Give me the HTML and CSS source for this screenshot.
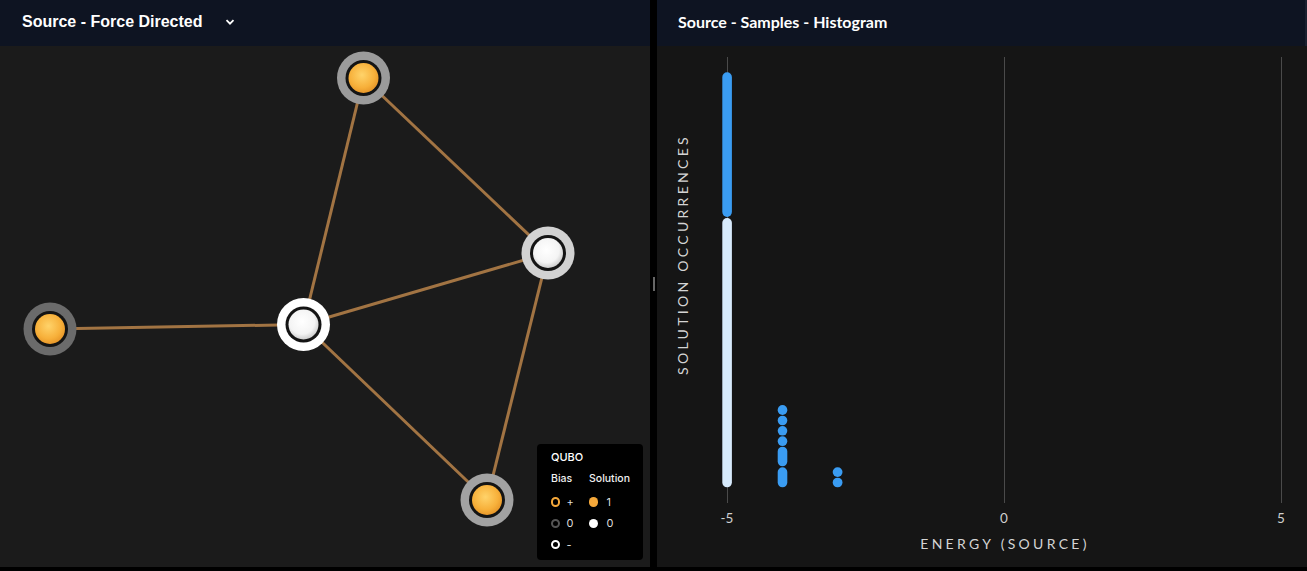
FILE: index.html
```html
<!DOCTYPE html>
<html>
<head>
<meta charset="utf-8">
<link rel="stylesheet" href="styles.css">
</head>
<body>
<div class="app">
  <section class="panel panel-left">
    <header class="panel-header">
      <span class="title title-left">Source - Force Directed</span>
      <svg class="chevron" width="10" height="8" viewBox="0 0 10 8"><path d="M1.5 2.2 L5 5.7 L8.5 2.2" fill="none" stroke="#fff" stroke-width="1.8"/></svg>
    </header>
    <div class="panel-body graph-body">
      <svg class="graph" width="650" height="521" viewBox="0 0 650 521">
        <defs>
          <radialGradient id="orange" cx="45%" cy="40%" r="60%">
            <stop offset="0%" stop-color="#ffd36a"/>
            <stop offset="70%" stop-color="#f7b03a"/>
            <stop offset="100%" stop-color="#e8982a"/>
          </radialGradient>
          <radialGradient id="white" cx="45%" cy="40%" r="60%">
            <stop offset="0%" stop-color="#ffffff"/>
            <stop offset="70%" stop-color="#f4f4f4"/>
            <stop offset="100%" stop-color="#cfcfcf"/>
          </radialGradient>
        </defs>
        <g class="edges" stroke="#a27443" stroke-width="3">
          <line x1="363.5" y1="32" x2="303.5" y2="278.5"/>
          <line x1="363.5" y1="32" x2="548" y2="207"/>
          <line x1="303.5" y1="278.5" x2="548" y2="207"/>
          <line x1="303.5" y1="278.5" x2="50" y2="283"/>
          <line x1="303.5" y1="278.5" x2="487" y2="454"/>
          <line x1="548" y1="207" x2="487" y2="454"/>
        </g>
        <g transform="translate(363.5 32)">
          <circle r="26.5" fill="#9b9b9b"/><circle r="18" fill="#141414"/><circle r="15" fill="url(#orange)"/>
        </g>
        <g transform="translate(548 207)">
          <circle r="26.5" fill="#d2d2d2"/><circle r="18" fill="#141414"/><circle r="15" fill="url(#white)"/>
        </g>
        <g transform="translate(303.5 278.5)">
          <circle r="26.5" fill="#ffffff"/><circle r="18" fill="#141414"/><circle r="15" fill="url(#white)"/>
        </g>
        <g transform="translate(50 283)">
          <circle r="26.5" fill="#6b6b6b"/><circle r="18" fill="#141414"/><circle r="15" fill="url(#orange)"/>
        </g>
        <g transform="translate(487 454)">
          <circle r="26.5" fill="#a2a2a2"/><circle r="18" fill="#141414"/><circle r="15" fill="url(#orange)"/>
        </g>
      </svg>
      <div class="legend">
        <div class="legend-title">QUBO</div>
        <div class="legend-grid">
          <div class="legend-head">Bias</div>
          <div class="legend-head">Solution</div>
          <div class="legend-item"><span class="ring ring-plus"></span><span>+</span></div>
          <div class="legend-item sol"><span class="dot dot-one"></span><span>1</span></div>
          <div class="legend-item"><span class="ring ring-zero"></span><span>0</span></div>
          <div class="legend-item sol"><span class="dot dot-zero"></span><span>0</span></div>
          <div class="legend-item"><span class="ring ring-minus"></span><span>-</span></div>
        </div>
      </div>
    </div>
  </section>
  <div class="divider"><span class="handle"></span></div>
  <section class="panel panel-right">
    <header class="panel-header header-right">
      <span class="title title-right">Source - Samples - Histogram</span>
    </header>
    <div class="panel-body chart-body">
      <svg class="chart" width="650" height="521" viewBox="0 0 650 521">
        <g stroke="#4a4a4a" stroke-width="1">
          <line x1="70.5" y1="11" x2="70.5" y2="457"/>
          <line x1="347.5" y1="11" x2="347.5" y2="457"/>
          <line x1="624.5" y1="11" x2="624.5" y2="457"/>
        </g>
        <rect x="65.3" y="172" width="9.6" height="269.3" rx="4.8" fill="#d7eafc"/>
        <rect x="65.3" y="26.3" width="9.6" height="144.6" rx="4.8" fill="#3a9cf2"/>
        <g fill="#3a9cf2">
          <rect x="120.7" y="359" width="9.6" height="10" rx="4.8"/>
          <rect x="120.7" y="369.7" width="9.6" height="9.6" rx="4.8"/>
          <rect x="120.7" y="380" width="9.6" height="9.6" rx="4.8"/>
          <rect x="120.7" y="390.3" width="9.6" height="9.8" rx="4.8"/>
          <rect x="120.7" y="400.7" width="9.6" height="19.6" rx="4.8"/>
          <rect x="120.7" y="421.3" width="9.6" height="20" rx="4.8"/>
          <rect x="175.7" y="421.3" width="9.8" height="9.6" rx="4.8"/>
          <rect x="175.7" y="431.7" width="9.8" height="9.6" rx="4.8"/>
        </g>
        <g class="tick-labels" fill="#d0d0d0" text-anchor="middle">
          <text x="70" y="477">-5</text>
          <text x="347" y="477">0</text>
          <text x="624" y="477">5</text>
        </g>
        <text class="axis-label" x="348" y="503" text-anchor="middle">ENERGY (SOURCE)</text>
        <text class="axis-label" transform="translate(31 208.5) rotate(-90)" text-anchor="middle">SOLUTION OCCURRENCES</text>
      </svg>
    </div>
  </section>
</div>
</body>
</html>
```

FILE: styles.css
```css
html, body {
  margin: 0;
  padding: 0;
}
body {
  background: #000;
  width: 1307px;
  height: 571px;
  overflow: hidden;
  font-family: "Lato", "Liberation Sans", sans-serif;
}
.app {
  display: flex;
  height: 567px;
}
.panel {
  display: flex;
  flex-direction: column;
}
.panel-left {
  width: 650px;
  background: #1b1b1b;
}
.panel-right {
  width: 650px;
  background: #151515;
}
.divider {
  width: 7px;
  display: flex;
  align-items: center;
  justify-content: center;
  background: #000;
}
.handle {
  display: block;
  width: 2px;
  height: 14px;
  background: #666;
}
.panel-header {
  height: 46px;
  background: #0e1422;
  display: flex;
  align-items: center;
  padding-left: 22px;
  flex-shrink: 0;
}
.header-right {
  padding-left: 21px;
  border-right: 2px solid #1a2130;
}
.title {
  color: #fff;
}
.title-left {
  font-family: "Liberation Sans", Arial, sans-serif;
  font-weight: 700;
  font-size: 16px;
  position: relative;
  top: -1px;
}
.title-right {
  font-family: "Lato", sans-serif;
  font-weight: 700;
  font-size: 16px;
  position: relative;
  top: -2px;
}
.chevron {
  margin-left: 22px;
  position: relative;
  top: -1px;
}
.panel-body {
  flex: 1;
  position: relative;
}
.graph, .chart {
  display: block;
}
.legend {
  position: absolute;
  right: 7px;
  bottom: 7px;
  width: 106px;
  height: 116px;
  box-sizing: border-box;
  background: #000;
  border-radius: 4px;
  padding: 7px 0 0 14px;
  color: #e6e6e6;
  font-family: "Inter", "Liberation Sans", sans-serif;
  font-size: 10.5px;
}
.legend-title {
  font-weight: 500;
  color: #fff;
  line-height: 13px;
  font-size: 11px;
}
.legend-grid {
  display: grid;
  grid-template-columns: 38px auto;
  grid-auto-rows: 21.3px;
  margin-top: 6px;
  align-items: center;
}
.legend-head {
  font-weight: 500;
  color: #f0f0f0;
  height: 18px;
  line-height: 13px;
}
.legend-item {
  display: flex;
  align-items: center;
  gap: 6px;
  color: #dedede;
  font-size: 11px;
}
.legend-item.sol {
  gap: 8px;
}
.ring, .dot {
  display: block;
  width: 9.4px;
  height: 9.4px;
  box-sizing: border-box;
  border-radius: 50%;
}
.ring {
  border: 2px solid #fff;
}
.ring-plus { border-color: #f5a83a; }
.ring-zero { border-color: #555; }
.ring-minus { border-color: #fff; }
.dot-one { background: #f5a83a; }
.dot-zero { background: #fff; }
.tick-labels {
  font-family: "Lato", sans-serif;
  font-size: 13.5px;
}
.axis-label {
  font-family: "Lato", sans-serif;
  font-size: 14px;
  letter-spacing: 3.3px;
  fill: #d4d4d4;
}
```
